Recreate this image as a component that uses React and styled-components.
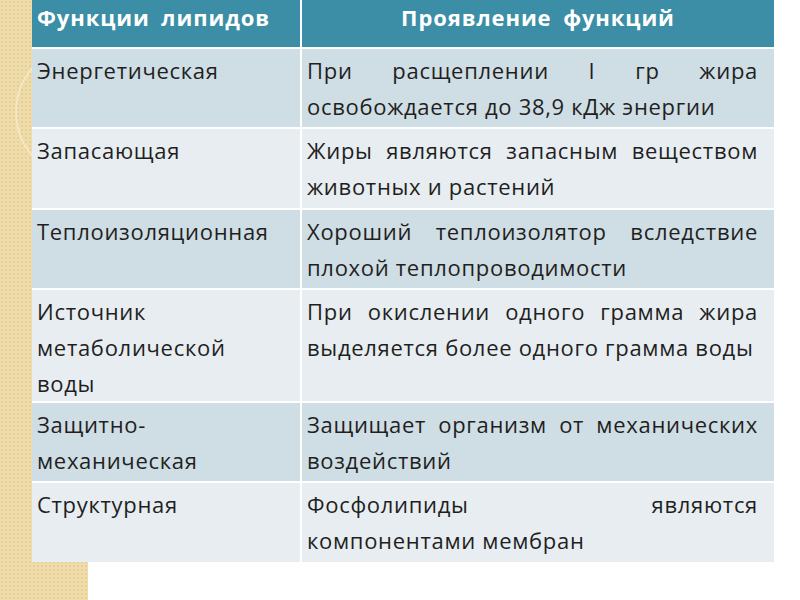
import React from "react";
import styled, { createGlobalStyle } from "styled-components";

const GlobalStyle = createGlobalStyle`
  html, body {
    margin: 0;
    padding: 0;
    background: #ffffff;
  }
  body {
    font-family: "Open Sans", "DejaVu Sans", sans-serif;
  }
`;

const rows = [
  {
    name: ["Энергетическая"],
    text: ["При расщеплении I гр жира", "освобождается до 38,9 кДж энергии"],
  },
  {
    name: ["Запасающая"],
    text: ["Жиры являются запасным веществом", "животных и растений"],
  },
  {
    name: ["Теплоизоляционная"],
    text: ["Хороший теплоизолятор вследствие", "плохой теплопроводимости"],
  },
  {
    name: ["Источник", "метаболической", "воды"],
    text: ["При окислении одного грамма жира", "выделяется более одного грамма воды"],
  },
  {
    name: ["Защитно-", "механическая"],
    text: ["Защищает организм от механических", "воздействий"],
  },
  {
    name: ["Структурная"],
    text: ["Фосфолипиды являются", "компонентами мембран"],
  },
];

const Slide = () => {
  return (
    <Page>
      <GlobalStyle />
      <Strip>
        <svg width="88" height="600" viewBox="0 0 88 600">
          <circle cx="82" cy="112" r="66" fill="none" stroke="#f4e7c4" strokeWidth="2" />
        </svg>
      </Strip>
      <Table>
        <HeadCell>Функции липидов</HeadCell>
        <HeadCell center>Проявление функций</HeadCell>
        {rows.map((row, i) => (
          <React.Fragment key={i}>
            <Cell dark={i % 2 === 0}>
              {row.name.map((line, j) => (
                <Line key={j}>{line}</Line>
              ))}
            </Cell>
            <Cell dark={i % 2 === 0} right>
              {row.text.map((line, j) => (
                <Line key={j} justify={j < row.text.length - 1}>
                  {line}
                </Line>
              ))}
            </Cell>
          </React.Fragment>
        ))}
      </Table>
    </Page>
  );
};

export default Slide;

const Page = styled.div`
  position: relative;
  width: 800px;
  height: 600px;
  overflow: hidden;
  background: #ffffff;
`;

const Strip = styled.div`
  position: absolute;
  left: 0;
  top: 0;
  width: 88px;
  height: 600px;
  background-color: #efdcab;
  background-image: radial-gradient(#e6cf95 0.8px, transparent 1px);
  background-size: 4px 4px;
  z-index: 0;

  svg {
    display: block;
  }
`;

const Table = styled.div`
  position: relative;
  z-index: 1;
  margin-left: 32px;
  width: 742px;
  display: grid;
  grid-template-columns: 268px 472px;
  grid-template-rows: 47px 78px 79px 78px 111px 78px 79px;
  gap: 2px;
  background: #ffffff;
`;

const HeadCell = styled.div`
  background: #3b8ea5;
  color: #ffffff;
  font-weight: 700;
  font-size: 22px;
  line-height: 34px;
  padding: 0 5px;
  text-align: ${(p) => (p.center ? "center" : "left")};
  letter-spacing: 0.9px;
  word-spacing: 5px;
`;

const Cell = styled.div`
  background: ${(p) => (p.dark ? "#cfdde4" : "#e7edf0")};
  color: #1f1f1f;
  font-size: 22px;
  line-height: 36px;
  letter-spacing: 0.7px;
  padding: 3px ${(p) => (p.right ? "16px" : "6px")} 0 5px;
`;

const Line = styled.div`
  white-space: nowrap;
  text-align: ${(p) => (p.justify ? "justify" : "left")};
  text-align-last: ${(p) => (p.justify ? "justify" : "left")};
  ${(p) => p.justify && "white-space: normal;"}
`;
